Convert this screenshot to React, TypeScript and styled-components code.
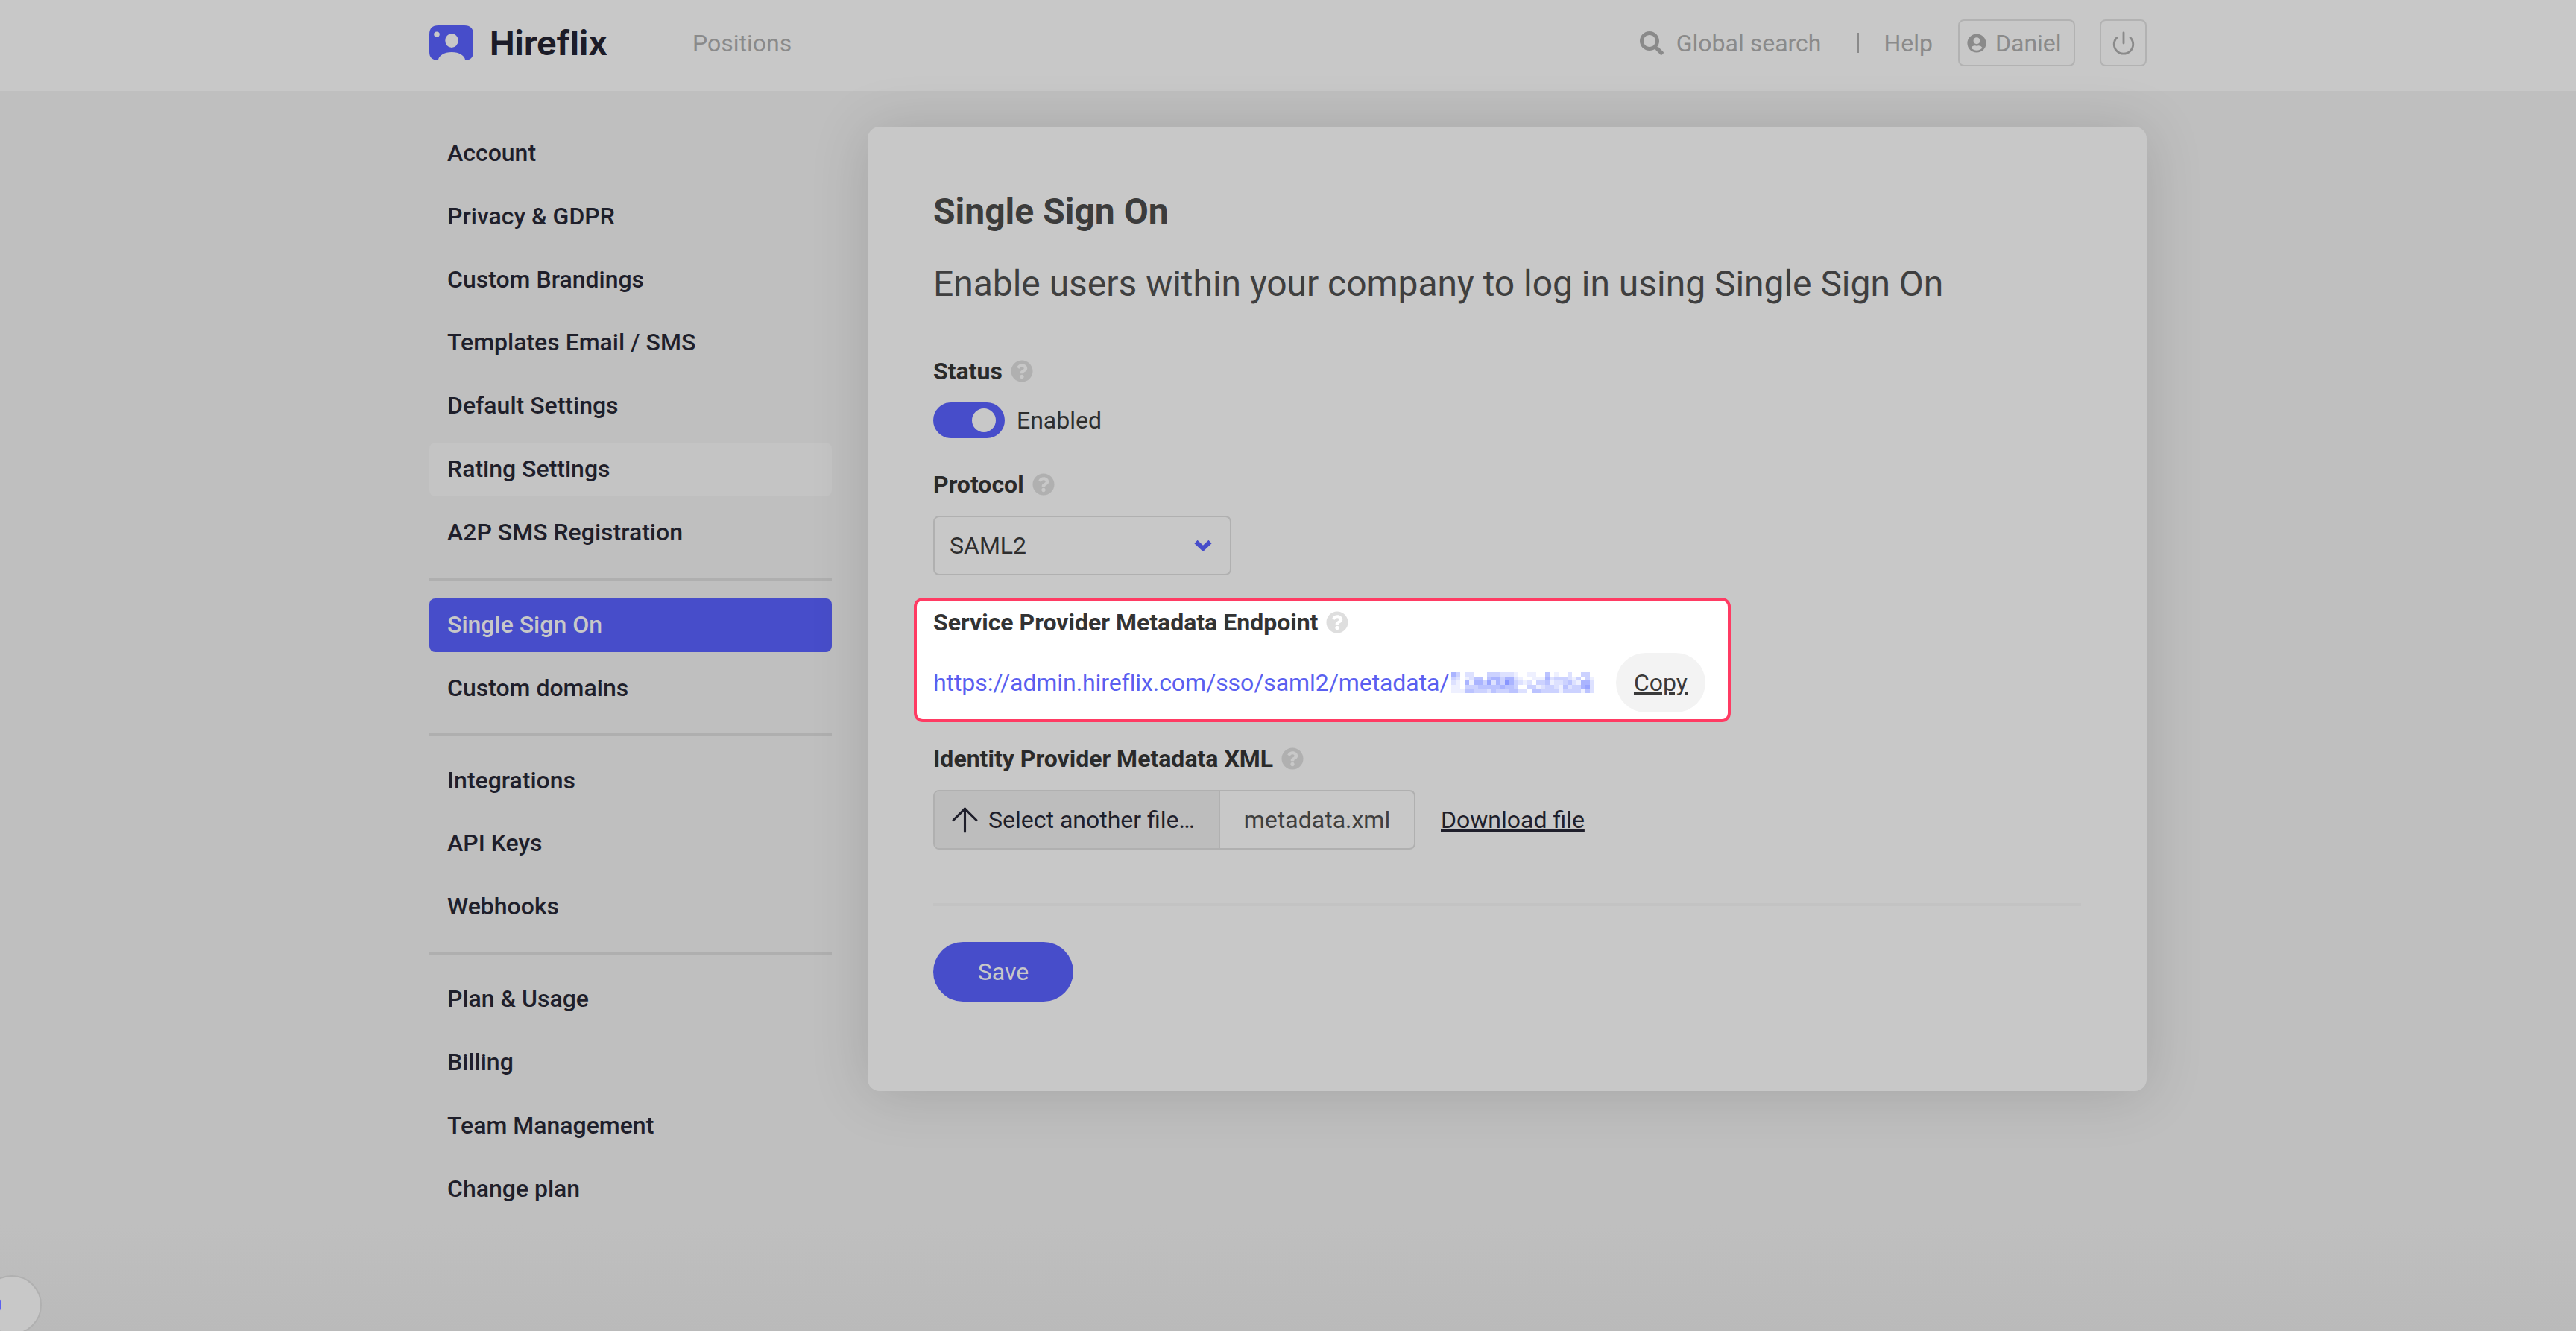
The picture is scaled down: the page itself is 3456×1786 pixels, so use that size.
import React from "react";
import styled, { createGlobalStyle } from "styled-components";
import { FaQuestionCircle, FaSearch, FaUserCircle } from "react-icons/fa";
import { FiArrowUp, FiPower } from "react-icons/fi";

const GlobalStyle = createGlobalStyle`
  html, body {
    margin: 0;
    padding: 0;
    background: #bfbfbf;
    font-family: Roboto, "Liberation Sans", sans-serif;
    overflow: hidden;
  }
  * { box-sizing: border-box; }
`;

const navGroups = [
  ["Account", "Privacy & GDPR", "Custom Brandings", "Templates Email / SMS", "Default Settings", "Rating Settings", "A2P SMS Registration"],
  ["Single Sign On", "Custom domains"],
  ["Integrations", "API Keys", "Webhooks"],
  ["Plan & Usage", "Billing", "Team Management", "Change plan"],
];

// blurred part of the url, one digit per mosaic cell (0 = white)
const mosaic = [
  "53022000333222100110040100200330",
  "32012440455355210011152333213031",
  "21051553625375321203341223421552",
  "11033344444544300331233214233562",
  "11144333243334422044333313333142",
];

const Logo = () => (
  <svg width="59" height="47" viewBox="0 0 59 47">
    <path
      fill="#474dca"
      fillRule="evenodd"
      d="M12 0H47C55 0 59 4 59 12V36C59 43 55 47 48 47A18 11 0 0 0 12 47C4 47 0 43 0 36V12C0 4 4 0 12 0ZM30 11A8.7 9.5 0 1 0 30 30A8.7 9.5 0 1 0 30 11ZM10 8.5A3.8 3.6 0 1 0 10 15.7A3.8 3.6 0 1 0 10 8.5Z"
    />
  </svg>
);

const Mosaic = () => (
  <svg width="192" height="28" viewBox="0 0 192 28" shapeRendering="crispEdges">
    {mosaic.map((row, y) =>
      row.split("").map((c, x) => {
        const l = Number(c);
        return (
          <rect
            key={x + "-" + y}
            x={x * 6}
            y={y * 5.6}
            width={6}
            height={5.6}
            fill={`rgb(${255 - l * 17},${255 - l * 15},255)`}
          />
        );
      })
    )}
  </svg>
);

const Chevron = () => (
  <svg width="24" height="16" viewBox="0 0 24 16">
    <path d="M2.5 3L12 12L21.5 3" fill="none" stroke="#474dca" strokeWidth="6" />
  </svg>
);

const Help = ({ light }: { light?: boolean }) => (
  <HelpMark $light={light}>
    <FaQuestionCircle size={30} />
  </HelpMark>
);

export default function App() {
  return (
    <Page>
      <GlobalStyle />
      <Header>
        <HeaderInner>
          <Brand>
            <Logo />
            <BrandName>Hireflix</BrandName>
          </Brand>
          <TopLink>Positions</TopLink>
          <HeaderRight>
            <SearchLink>
              <FaSearch size={32} />
              Global search
            </SearchLink>
            <Separator />
            <TopLink>Help</TopLink>
            <OutlineButton>
              <FaUserCircle size={26} />
              Daniel
            </OutlineButton>
            <PowerButton>
              <FiPower size={34} />
            </PowerButton>
          </HeaderRight>
        </HeaderInner>
      </Header>
      <Main>
        <Sidebar>
          {navGroups.map((group, i) => (
            <NavGroup key={i}>
              {group.map((item) => (
                <NavItem
                  key={item}
                  $active={item === "Single Sign On"}
                  $hover={item === "Rating Settings"}
                >
                  {item}
                </NavItem>
              ))}
            </NavGroup>
          ))}
        </Sidebar>
        <Card>
          <Title>Single Sign On</Title>
          <Subtitle>Enable users within your company to log in using Single Sign On</Subtitle>

          <StatusField>
            <FieldLabel>
              Status <Help />
            </FieldLabel>
            <SwitchRow>
              <Switch>
                <Knob />
              </Switch>
              Enabled
            </SwitchRow>
          </StatusField>

          <Field>
            <FieldLabel>
              Protocol <Help />
            </FieldLabel>
            <SelectBox>
              SAML2
              <Chevron />
            </SelectBox>
          </Field>

          <Spotlight>
            <SpotlightLabel>
              Service Provider Metadata Endpoint <Help light />
            </SpotlightLabel>
            <UrlRow>
              <UrlText>
                https://admin.hireflix.com/sso/saml2/metadata/
                <Mosaic />
              </UrlText>
              <CopyPill>Copy</CopyPill>
            </UrlRow>
          </Spotlight>

          <IdentityField>
            <FieldLabel>
              Identity Provider Metadata XML <Help />
            </FieldLabel>
            <FileRow>
              <FileGroup>
                <FileSelect>
                  <FiArrowUp size={53} strokeWidth={1.4} />
                  Select another file…
                </FileSelect>
                <FileName>metadata.xml</FileName>
              </FileGroup>
              <DownloadLink>Download file</DownloadLink>
            </FileRow>
          </IdentityField>

          <Divider />
          <SaveButton>Save</SaveButton>
        </Card>
      </Main>
      <ChatBubble>
        <ChatDot />
      </ChatBubble>
    </Page>
  );
}

const Page = styled.div`
  position: relative;
  height: 1786px;
  overflow: hidden;
  background: linear-gradient(180deg, #bfbfbf 0%, #bfbfbf 92%, #bababa 100%);
`;

const Header = styled.header`
  height: 122px;
  background: #c8c8c8;
`;

const HeaderInner = styled.div`
  width: 2304px;
  height: 100%;
  margin: 0 auto;
  padding-bottom: 7px;
  display: flex;
  align-items: center;
`;

const Brand = styled.div`
  display: flex;
  align-items: center;
  gap: 22px;
  width: 353px;
  margin-top: -1px;
`;

const BrandName = styled.span`
  font-family: Inter, sans-serif;
  font-weight: 700;
  font-size: 45px;
  color: #1c1c28;
`;

const TopLink = styled.span`
  font-size: 32px;
  color: #8a8a8a;
`;

const HeaderRight = styled.div`
  margin-left: auto;
  display: flex;
  align-items: center;
`;

const SearchLink = styled.span`
  display: flex;
  align-items: center;
  gap: 17px;
  font-size: 32px;
  color: #8a8a8a;
`;

const Separator = styled.span`
  width: 2px;
  height: 27px;
  background: #8a8a8a;
  margin: 0 33px 0 49px;
`;

const OutlineButton = styled.span`
  height: 63px;
  width: 157px;
  margin-left: 34px;
  border: 2px solid #b2b2b2;
  border-radius: 8px;
  display: flex;
  align-items: center;
  gap: 12px;
  padding-left: 10px;
  font-size: 32px;
  color: #8a8a8a;
`;

const PowerButton = styled.span`
  height: 63px;
  width: 63px;
  margin-left: 33px;
  border: 2px solid #b2b2b2;
  border-radius: 8px;
  display: flex;
  align-items: center;
  justify-content: center;
  color: #8a8a8a;
`;

const Main = styled.main`
  width: 2304px;
  margin: 48px auto 0;
  display: flex;
  gap: 48px;
  align-items: flex-start;
`;

const Sidebar = styled.nav`
  width: 540px;
  flex: none;
`;

const NavGroup = styled.div`
  display: flex;
  flex-direction: column;
  gap: 12.8px;
  padding: 0 0 24px;
  margin-bottom: 24px;
  border-bottom: 4px solid #afafaf;
  &:last-child {
    border-bottom: none;
  }
`;

const NavItem = styled.div<{ $active?: boolean; $hover?: boolean }>`
  height: 72px;
  display: flex;
  align-items: center;
  padding: 0 24px 2px;
  border-radius: 8px;
  font-size: 32px;
  font-weight: 500;
  color: ${(p) => (p.$active ? "#c8c8c8" : "#1f1f2b")};
  background: ${(p) => (p.$active ? "#474dca" : p.$hover ? "#c4c4c4" : "transparent")};
`;

const Card = styled.section`
  width: 1716px;
  height: 1294px;
  flex: none;
  padding: 84px 88px 0;
  background: #c8c8c8;
  border-radius: 16px;
  box-shadow: 0 4px 80px rgba(0, 0, 0, 0.14);
`;

const Title = styled.h1`
  margin: 0;
  font-size: 48px;
  line-height: 60px;
  font-weight: 700;
  color: #3c3c3c;
`;

const Subtitle = styled.p`
  margin: 37px 0 0;
  font-size: 48px;
  line-height: 60px;
  font-weight: 400;
  letter-spacing: -0.03px;
  color: #3f3f3f;
`;

const Field = styled.div`
  margin-top: 42px;
`;

const StatusField = styled.div`
  margin-top: 67px;
`;

const FieldLabel = styled.div`
  height: 40px;
  display: flex;
  align-items: center;
  gap: 11px;
  font-size: 32px;
  font-weight: 700;
  color: #2a2a2a;
  margin-bottom: 22px;
`;

const HelpMark = styled.span<{ $light?: boolean }>`
  display: inline-flex;
  color: ${(p) => (p.$light ? "#dedede" : "#b0b0b0")};
`;

const SwitchRow = styled.div`
  display: flex;
  align-items: center;
  gap: 16px;
  font-size: 32px;
  color: #2e2e2e;
`;

const Switch = styled.span`
  width: 96px;
  height: 48px;
  border-radius: 24px;
  background: #474dca;
  display: flex;
  align-items: center;
  justify-content: flex-end;
  padding-right: 12px;
`;

const Knob = styled.span`
  width: 32px;
  height: 32px;
  border-radius: 50%;
  background: #c8c8c8;
`;

const SelectBox = styled.div`
  width: 400px;
  height: 80px;
  border: 2px solid #b0b0b0;
  border-radius: 8px;
  display: flex;
  align-items: center;
  justify-content: space-between;
  padding: 0 24px 0 20px;
  font-size: 32px;
  color: #2e2e2e;
`;

const Spotlight = styled.div`
  width: 1096px;
  margin: 30px 0 0 -26px;
  padding: 9px 30px 9px 22px;
  background: #fff;
  border: 4px solid #ff3b63;
  border-radius: 12px;
`;

const SpotlightLabel = styled.div`
  height: 40px;
  display: flex;
  align-items: center;
  gap: 11px;
  font-size: 32px;
  font-weight: 700;
  color: #333;
  margin-bottom: 21px;
`;

const UrlRow = styled.div`
  display: flex;
  align-items: center;
  justify-content: space-between;
`;

const UrlText = styled.span`
  display: flex;
  align-items: center;
  gap: 2px;
  font-size: 32px;
  letter-spacing: -0.08px;
  color: #5a5ff0;
`;

const CopyPill = styled.span`
  width: 120px;
  height: 80px;
  border-radius: 40px;
  background: #f3f3f3;
  display: flex;
  align-items: center;
  justify-content: center;
  font-size: 32px;
  color: #3a3a3a;
  text-decoration: underline;
`;

const IdentityField = styled.div`
  margin-top: 29px;
`;

const FileRow = styled.div`
  display: flex;
  align-items: center;
  gap: 34px;
`;

const FileGroup = styled.div`
  width: 647px;
  height: 80px;
  display: flex;
  border: 2px solid #b0b0b0;
  border-radius: 8px;
  overflow: hidden;
`;

const FileSelect = styled.div`
  width: 383px;
  flex: none;
  display: flex;
  align-items: center;
  gap: 5px;
  padding-left: 14px;
  background: #bdbdbd;
  border-right: 2px solid #b0b0b0;
  font-size: 32px;
  color: #1f1f2b;
`;

const FileName = styled.div`
  flex: 1;
  display: flex;
  align-items: center;
  justify-content: center;
  font-size: 32px;
  color: #3f3f3f;
`;

const DownloadLink = styled.span`
  font-size: 32px;
  color: #1f1f2b;
  text-decoration: underline;
`;

const Divider = styled.div`
  height: 4px;
  margin-top: 72px;
  background: #c3c3c3;
`;

const SaveButton = styled.button`
  display: block;
  width: 188px;
  height: 80px;
  margin-top: 48px;
  padding: 0;
  border: none;
  border-radius: 40px;
  background: #474dca;
  font-family: inherit;
  font-size: 32px;
  color: #c8c8c8;
`;

const ChatBubble = styled.div`
  position: fixed;
  left: -24px;
  top: 1711px;
  width: 80px;
  height: 80px;
  border-radius: 50%;
  background: #c8c8c8;
  border: 2px solid #b0b0b0;
`;

const ChatDot = styled.span`
  position: absolute;
  left: 12px;
  top: 28px;
  width: 12px;
  height: 20px;
  border-radius: 50%;
  background: #5a5ff0;
`;
